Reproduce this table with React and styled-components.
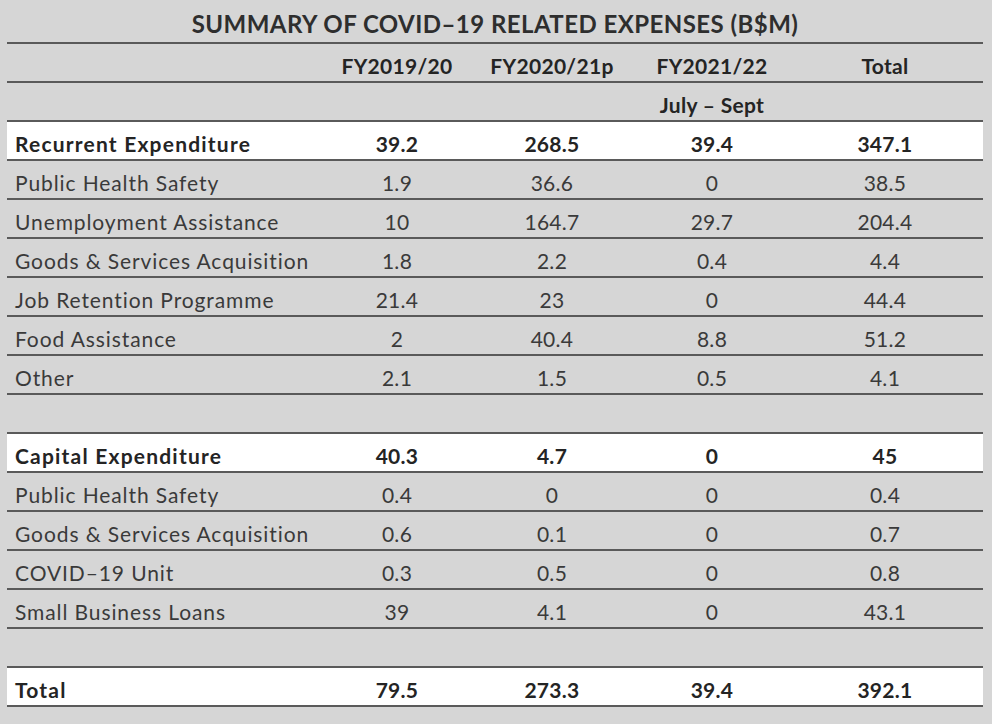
import React from 'react'
import styled, { createGlobalStyle } from 'styled-components'

const GlobalStyle = createGlobalStyle`
    body {
        margin: 0;
        background: #d6d6d6;
        font-family: Lato, "Open Sans", sans-serif;
        color: #383838;
    }
`

const Page = styled.div`
    padding: 0 9px 0 7px;
    width: 976px;
`

const Title = styled.h1`
    margin: 0;
    height: 42px;
    border-bottom: 2px solid #5a5a5a;
    font-size: 24px;
    font-weight: 700;
    color: #2e2e2e;
    text-align: center;
    line-height: 48px;
    letter-spacing: 0.45px;
`

const Row = styled.div`
    display: grid;
    grid-template-columns: 320px 140px 170px 150px 196px;
    height: 37px;
    border-bottom: 2px solid #5a5a5a;
    background: ${props => (props.$highlight ? '#ffffff' : 'transparent')};
    font-size: 21px;
    font-weight: ${props => (props.$bold ? 700 : 400)};
    color: ${props => (props.$bold ? '#242424' : '#3a3a3a')};
`

const Label = styled.div`
    padding-left: 8px;
    line-height: 44px;
    white-space: nowrap;
    letter-spacing: ${props => (props.$bold ? '1.2px' : '0.9px')};
`

const Cell = styled.div`
    text-align: center;
    line-height: 44px;
    white-space: nowrap;
    letter-spacing: 0.3px;
`

const recurrent = [
    ['Public Health Safety', '1.9', '36.6', '0', '38.5'],
    ['Unemployment Assistance', '10', '164.7', '29.7', '204.4'],
    ['Goods & Services Acquisition', '1.8', '2.2', '0.4', '4.4'],
    ['Job Retention Programme', '21.4', '23', '0', '44.4'],
    ['Food Assistance', '2', '40.4', '8.8', '51.2'],
    ['Other', '2.1', '1.5', '0.5', '4.1'],
]

const capital = [
    ['Public Health Safety', '0.4', '0', '0', '0.4'],
    ['Goods & Services Acquisition', '0.6', '0.1', '0', '0.7'],
    ['COVID\u201319 Unit', '0.3', '0.5', '0', '0.8'],
    ['Small Business Loans', '39', '4.1', '0', '43.1'],
]

const DataRow = ({ values, bold, highlight }) => (
    <Row $bold={bold} $highlight={highlight}>
        <Label $bold={bold}>{values[0]}</Label>
        {values.slice(1).map((v, i) => (
            <Cell key={i}>{v}</Cell>
        ))}
    </Row>
)

const App = () => {
    return (
        <Page>
            <GlobalStyle />
            <Title>SUMMARY OF COVID–19 RELATED EXPENSES (B$M)</Title>
            <DataRow bold values={['', 'FY2019/20', 'FY2020/21p', 'FY2021/22', 'Total']} />
            <DataRow bold values={['', '', '', 'July – Sept', '']} />
            <DataRow bold highlight values={['Recurrent Expenditure', '39.2', '268.5', '39.4', '347.1']} />
            {recurrent.map(r => <DataRow key={r[0]} values={r} />)}
            <Row />
            <DataRow bold highlight values={['Capital Expenditure', '40.3', '4.7', '0', '45']} />
            {capital.map(r => <DataRow key={r[0]} values={r} />)}
            <Row />
            <DataRow bold highlight values={['Total', '79.5', '273.3', '39.4', '392.1']} />
        </Page>
    )
}

export default App
